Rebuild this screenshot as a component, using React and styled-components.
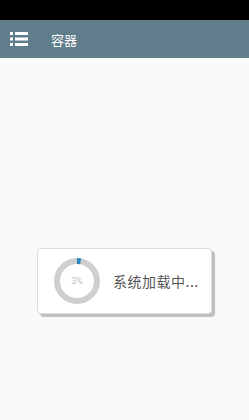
import React from "react";
import styled, { createGlobalStyle } from "styled-components";

const Global = createGlobalStyle`
  html, body { margin: 0; padding: 0; }
  body { background: #fafafa; font-family: "Roboto", "Noto Sans CJK SC", sans-serif; }
`;

const Page = styled.div`
  width: 249px;
  height: 420px;
  display: flex;
  flex-direction: column;
  background: #fafafa;
  overflow: hidden;
`;

const StatusBar = styled.div`
  height: 20px;
  background: #000;
  flex: none;
`;

const Header = styled.div`
  height: 38px;
  background: #607d8b;
  display: flex;
  align-items: center;
  padding-left: 10px;
  gap: 23px;
  flex: none;
`;

const Title = styled.span`
  color: #fff;
  font-size: 13px;
  font-family: "Noto Sans CJK SC", sans-serif;
`;

const Body = styled.div`
  flex: 1;
  display: flex;
  align-items: center;
  justify-content: center;
`;

const Dialog = styled.div`
  width: 175px;
  height: 66px;
  margin-top: 84px;
  box-sizing: border-box;
  background: #fff;
  border: 1px solid #dcdcdc;
  border-radius: 4px;
  box-shadow: 3px 3px 1px #bdbdbd;
  display: flex;
  align-items: center;
  padding-left: 16px;
  gap: 13px;
`;

const RingWrap = styled.div`
  position: relative;
  width: 46px;
  height: 46px;
  flex: none;
`;

const RingLabel = styled.span`
  position: absolute;
  inset: 0;
  display: flex;
  align-items: center;
  justify-content: center;
  font-size: 9px;
  color: #bdbdbd;
`;

const Message = styled.span`
  font-size: 14px;
  letter-spacing: 0.5px;
  color: #555;
  font-family: "Noto Sans CJK SC", sans-serif;
`;

function ListIcon() {
  return (
    <svg width="18" height="16" viewBox="0 0 18 16">
      <g fill="#fff">
        <rect x="0" y="1" width="3" height="3" />
        <rect x="5" y="1" width="13" height="3" />
        <rect x="0" y="6.5" width="3" height="3" />
        <rect x="5" y="6.5" width="13" height="3" />
        <rect x="0" y="12" width="3" height="3" />
        <rect x="5" y="12" width="13" height="3" />
      </g>
    </svg>
  );
}

function Ring({ pct }) {
  const r = 20;
  const c = 2 * Math.PI * r;
  return (
    <RingWrap>
      <svg width="46" height="46" viewBox="0 0 46 46">
        <circle cx="23" cy="23" r={r} fill="none" stroke="#cfcfcf" strokeWidth="6" />
        <circle
          cx="23"
          cy="23"
          r={r}
          fill="none"
          stroke="#2b86c5"
          strokeWidth="6"
          strokeDasharray={`${(c * pct) / 100} ${c}`}
          transform="rotate(-90 23 23)"
        />
      </svg>
      <RingLabel>{pct}%</RingLabel>
    </RingWrap>
  );
}

export default function App() {
  return (
    <Page>
      <Global />
      <StatusBar />
      <Header>
        <ListIcon />
        <Title>容器</Title>
      </Header>
      <Body>
        <Dialog>
          <Ring pct={3} />
          <Message>系统加载中...</Message>
        </Dialog>
      </Body>
    </Page>
  );
}
